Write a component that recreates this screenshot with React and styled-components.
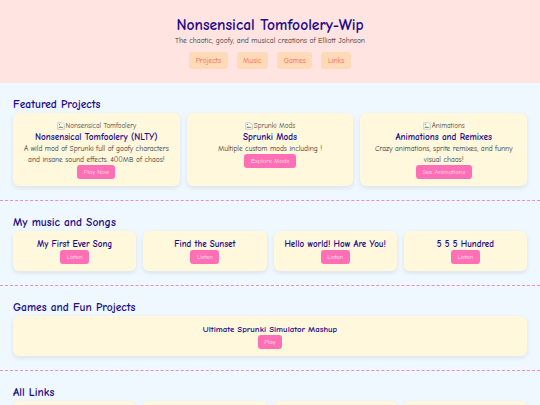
import React from "react";
import styled, { createGlobalStyle } from "styled-components";

const GlobalStyle = createGlobalStyle`
    html, body {
        margin: 0;
        padding: 0;
    }
    body {
        background: #f0f8ff;
        font-family: "Comic Sans MS", "Comic Neue", "Open Sans", sans-serif;
        color: #333;
    }
`;

const Header = styled.header`
    background: #ffe4e1;
    padding: 14px 0;
    text-align: center;
`;

const Title = styled.h1`
    margin: 0;
    font-size: 15.5px;
    line-height: 22px;
    font-weight: 700;
    color: #1f0c88;
`;

const Tagline = styled.p`
    margin: 0;
    font-size: 7.5px;
    line-height: 9px;
    color: #333;
`;

const Nav = styled.nav`
    display: flex;
    justify-content: center;
    gap: 9px;
    margin-top: 7px;
`;

const NavLink = styled.a`
    display: block;
    height: 17px;
    line-height: 17px;
    padding: 0 6.5px;
    border-radius: 3px;
    background: #ffdab9;
    color: #ff6347;
    font-size: 7.5px;
    text-decoration: none;
`;

const Section = styled.section`
    padding: 14px 13px;
    border-bottom: ${(props) => (props.$last ? "none" : "1px dashed #e88ccd")};
`;

const Heading = styled.h2`
    margin: 0 0 1px;
    font-size: 11.5px;
    line-height: 15px;
    font-weight: 700;
    color: #1f0c88;
`;

const Grid = styled.div`
    display: grid;
    grid-template-columns: repeat(${(props) => props.$cols}, 1fr);
    gap: 7px;
`;

const Card = styled.div`
    display: flex;
    flex-direction: column;
    align-items: center;
    padding: ${(props) => (props.$compact ? "7px 6px" : "8px 8px 7px")};
    border-radius: 6px;
    background: #fff8dc;
    box-shadow: 0 2px 5px rgba(0, 0, 0, 0.09);
    text-align: center;
`;

const Broken = styled.div`
    display: flex;
    align-items: center;
    justify-content: center;
    height: 10px;
    font-size: 7px;
    color: #444;
`;

const CardTitle = styled.h3`
    margin: 0;
    font-size: ${(props) => props.$size || "9.2px"};
    line-height: 12px;
    font-weight: 700;
    color: #1f0c88;
`;

const Desc = styled.p`
    margin: 0;
    font-size: 7.4px;
    line-height: 11px;
    color: #333;
`;

const Button = styled.a`
    display: block;
    height: 14px;
    line-height: 14px;
    padding: 0 6.5px;
    border-radius: 3px;
    background: #ff6fb5;
    color: #ffe6f2;
    font-size: 6.5px;
    text-decoration: none;
`;

const BrokenIcon = () => (
    <svg width="8" height="8" viewBox="0 0 16 16" style={{ marginRight: 1 }}>
        <path d="M1.5 1.5h9l4 4v9h-13z" fill="#fff" stroke="#999" />
        <path d="M3 12l3-4 2 2.5 2-1.5 3 3z" fill="#6aa84f" />
        <circle cx="5" cy="5" r="1.3" fill="#e06666" />
    </svg>
);

const featured = [
    {
        alt: "Nonsensical Tomfoolery",
        title: "Nonsensical Tomfoolery (NLTY)",
        desc: "A wild mod of Sprunki full of goofy characters and insane sound effects. 400MB of chaos!",
        button: "Play Now",
    },
    {
        alt: "Sprunki Mods",
        title: "Sprunki Mods",
        desc: "Multiple custom mods including !",
        button: "Explore Mods",
    },
    {
        alt: "Animations",
        title: "Animations and Remixes",
        desc: "Crazy animations, sprite remixes, and funny visual chaos!",
        button: "See Animations",
    },
];

const songs = ["My First Ever Song", "Find the Sunset", "Hello world! How Are You!", "5 5 5 Hundred"];

const links = ["YouTube", "Scratch", "GitHub", "Discord"];

export default function App() {
    return (
        <>
            <GlobalStyle />
            <Header>
                <Title>Nonsensical Tomfoolery-Wip</Title>
                <Tagline>The chaotic, goofy, and musical creations of Elliott Johnson</Tagline>
                <Nav>
                    <NavLink href="#projects">Projects</NavLink>
                    <NavLink href="#music">Music</NavLink>
                    <NavLink href="#games">Games</NavLink>
                    <NavLink href="#links">Links</NavLink>
                </Nav>
            </Header>

            <Section id="projects">
                <Heading>Featured Projects</Heading>
                <Grid $cols={3}>
                    {featured.map((item) => (
                        <Card key={item.title}>
                            <Broken>
                                <BrokenIcon />
                                {item.alt}
                            </Broken>
                            <CardTitle>{item.title}</CardTitle>
                            <Desc>{item.desc}</Desc>
                            <Button href="#">{item.button}</Button>
                        </Card>
                    ))}
                </Grid>
            </Section>

            <Section id="music">
                <Heading>My music and Songs</Heading>
                <Grid $cols={4}>
                    {songs.map((song) => (
                        <Card key={song} $compact>
                            <CardTitle $size="9px">{song}</CardTitle>
                            <Button href="#">Listen</Button>
                        </Card>
                    ))}
                </Grid>
            </Section>

            <Section id="games">
                <Heading>Games and Fun Projects</Heading>
                <Grid $cols={1}>
                    <Card $compact>
                        <CardTitle $size="8.8px">Ultimate Sprunki Simulator Mashup</CardTitle>
                        <Button href="#">Play</Button>
                    </Card>
                </Grid>
            </Section>

            <Section id="links" $last>
                <Heading>All Links</Heading>
                <Grid $cols={4}>
                    {links.map((link) => (
                        <Card key={link} $compact>
                            <CardTitle $size="9px">{link}</CardTitle>
                            <Button href="#">Visit</Button>
                        </Card>
                    ))}
                </Grid>
            </Section>
        </>
    );
}
